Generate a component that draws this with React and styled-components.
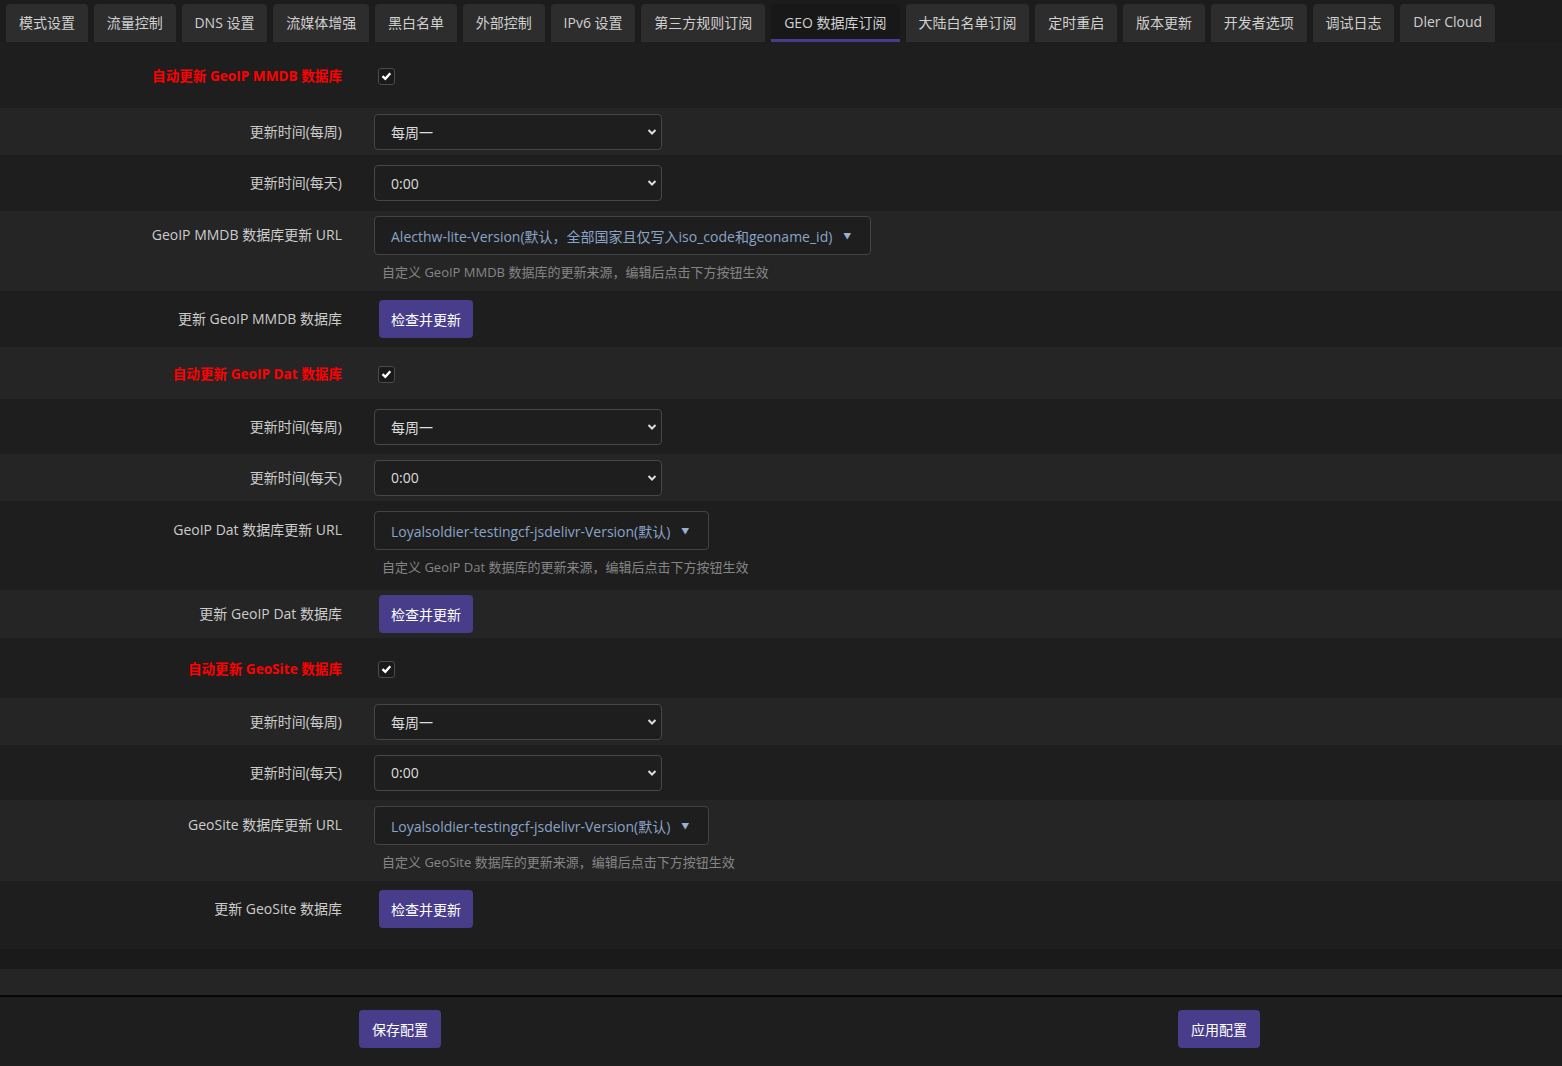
import styled, { createGlobalStyle } from "styled-components";

const GlobalStyle = createGlobalStyle`
  html, body {
    margin: 0;
    padding: 0;
    background: #1f1f1f;
  }
  body {
    font-family: "Open Sans", "Noto Sans CJK SC", sans-serif;
    font-size: 14px;
    color: #cccccc;
  }
  * { box-sizing: border-box; }
`;

const tabs = [
  "模式设置",
  "流量控制",
  "DNS 设置",
  "流媒体增强",
  "黑白名单",
  "外部控制",
  "IPv6 设置",
  "第三方规则订阅",
  "GEO 数据库订阅",
  "大陆白名单订阅",
  "定时重启",
  "版本更新",
  "开发者选项",
  "调试日志",
  "Dler Cloud",
];

const sections = [
  {
    name: "GeoIP MMDB",
    url: "Alecthw-lite-Version(默认，全部国家且仅写入iso_code和geoname_id)",
    heights: [66, 47, 56, 80, 56],
    urlTop: 5,
  },
  {
    name: "GeoIP Dat",
    url: "Loyalsoldier-testingcf-jsdelivr-Version(默认)",
    heights: [52, 55, 47, 89, 48],
    urlTop: 10,
  },
  {
    name: "GeoSite",
    url: "Loyalsoldier-testingcf-jsdelivr-Version(默认)",
    heights: [60, 47, 55, 81, 68],
    urlTop: 6,
    lastPad: 12,
  },
];

const App = () => {
  let idx = 0;
  return (
    <Page>
      <GlobalStyle />
      <TabBar>
        {tabs.map((t) => (
          <Tab key={t} $active={t === "GEO 数据库订阅"}>
            {t}
          </Tab>
        ))}
      </TabBar>
      <Form>
        {sections.map((s) => {
          const rows = [];
          const [h1, h2, h3, h4, h5] = s.heights;
          rows.push(
            <Row key={s.name + "a"} $h={h1} $alt={idx++ % 2 === 1}>
              <Label $red>自动更新 {s.name} 数据库</Label>
              <Field>
                <Check>
                  <svg width="11" height="10" viewBox="0 0 11 10">
                    <path d="M1.5 5.2 L4.3 7.8 L9.3 2.2" fill="none" stroke="#fff" strokeWidth="2.4" />
                  </svg>
                </Check>
              </Field>
            </Row>
          );
          rows.push(
            <Row key={s.name + "w"} $h={h2} $alt={idx++ % 2 === 1}>
              <Label>更新时间(每周)</Label>
              <Field>
                <SelectBox>
                  <span>每周一</span>
                  <Chevron />
                </SelectBox>
              </Field>
            </Row>
          );
          rows.push(
            <Row key={s.name + "d"} $h={h3} $alt={idx++ % 2 === 1}>
              <Label>更新时间(每天)</Label>
              <Field>
                <SelectBox>
                  <span>0:00</span>
                  <Chevron />
                </SelectBox>
              </Field>
            </Row>
          );
          rows.push(
            <Row key={s.name + "u"} $h={h4} $alt={idx++ % 2 === 1} $top={s.urlTop}>
              <Label $tall>{s.name} 数据库更新 URL</Label>
              <Field>
                <UrlBox>
                  <span>{s.url}</span>
                  <Caret>▼</Caret>
                </UrlBox>
                <Hint>自定义 {s.name} 数据库的更新来源，编辑后点击下方按钮生效</Hint>
              </Field>
            </Row>
          );
          rows.push(
            <Row key={s.name + "b"} $h={h5} $alt={idx++ % 2 === 1} $bottom={s.lastPad}>
              <Label>更新 {s.name} 数据库</Label>
              <Field>
                <Button $ml={5}>检查并更新</Button>
              </Field>
            </Row>
          );
          return rows;
        })}
      </Form>
      <Spacer />
      <Blank />
      <Footer>
        <Button $wide>保存配置</Button>
        <Button $wide>应用配置</Button>
      </Footer>
    </Page>
  );
};

const Chevron = () => (
  <svg width="10" height="8" viewBox="0 0 10 8">
    <path d="M1.5 2 L5 5.5 L8.5 2" fill="none" stroke="#ddd" strokeWidth="2" />
  </svg>
);

export default App;

const Page = styled.div`
  min-height: 1066px;
  background: #1f1f1f;
`;

const TabBar = styled.nav`
  display: flex;
  gap: 6px;
  padding: 4px 6px 0;
  background: #1c1c1c;
`;

const Tab = styled.div`
  height: 38px;
  padding: 0 12.9px;
  display: flex;
  align-items: center;
  white-space: nowrap;
  color: #d0d0d0;
  font-size: 14px;
  border-radius: 4px 4px 0 0;
  background: ${(p) => (p.$active ? "#181818" : "#2d2d2d")};
  border-bottom: 3px solid ${(p) => (p.$active ? "#483d8b" : "transparent")};
`;

const Form = styled.div`
  display: flex;
  flex-direction: column;
`;

const Row = styled.div`
  height: ${(p) => p.$h}px;
  display: flex;
  align-items: ${(p) => (p.$top != null ? "flex-start" : "center")};
  padding-top: ${(p) => p.$top || 0}px;
  padding-bottom: ${(p) => p.$bottom || 0}px;
  gap: 32px;
  background: ${(p) => (p.$alt ? "#252525" : "#1e1e1e")};
`;

const Label = styled.div`
  width: 342px;
  flex-shrink: 0;
  text-align: right;
  white-space: nowrap;
  font-size: ${(p) => (p.$red ? "13.6px" : "14px")};
  color: ${(p) => (p.$red ? "#ff0000" : "#cccccc")};
  font-weight: ${(p) => (p.$red ? 700 : 400)};
  line-height: ${(p) => (p.$tall ? "38px" : "20px")};
  margin-top: ${(p) => (p.$red ? "1px" : "0")};
`;

const Field = styled.div`
  display: flex;
  flex-direction: column;
  align-items: flex-start;
`;

const Check = styled.div`
  width: 17px;
  height: 17px;
  margin: 2px 0 0 4px;
  border: 1px solid #4a4a4a;
  border-radius: 3px;
  background: #1a1a1a;
  display: flex;
  align-items: center;
  justify-content: center;
`;

const SelectBox = styled.div`
  width: 288px;
  height: 36px;
  border: 1px solid #474747;
  border-radius: 4px;
  background: #1e1e1e;
  color: #dddddd;
  display: flex;
  align-items: center;
  justify-content: space-between;
  padding: 0 4px 0 16px;
  font-size: 14px;
`;

const UrlBox = styled.div`
  height: 39px;
  display: inline-flex;
  align-items: center;
  gap: 11px;
  padding: 0 19px 0 16px;
  border: 1px solid #444;
  border-radius: 4px;
  background: #1e1e1e;
  color: #8aa4c8;
  font-size: 14px;
  white-space: nowrap;
`;

const Caret = styled.span`
  font-size: 8px;
  color: #9ab0d0;
`;

const Hint = styled.div`
  margin: 7px 0 0 8px;
  font-size: 13px;
  color: #858585;
  white-space: nowrap;
`;

const Button = styled.button`
  height: 38px;
  margin-left: ${(p) => p.$ml || 0}px;
  padding: 0 ${(p) => (p.$wide ? 13 : 12)}px;
  border: none;
  border-radius: 4px;
  background: #483d8b;
  color: #ffffff;
  font-family: inherit;
  font-size: 14px;
  cursor: pointer;
`;

const Spacer = styled.div`
  height: 20px;
  background: #1a1a1a;
`;

const Blank = styled.div`
  height: 28px;
  background: #252525;
  border-bottom: 2px solid #050505;
`;

const Footer = styled.footer`
  height: 68px;
  display: flex;
  align-items: center;
  justify-content: space-between;
  padding: 0 302px 4px 359px;
  background: #1e1e1e;
`;
